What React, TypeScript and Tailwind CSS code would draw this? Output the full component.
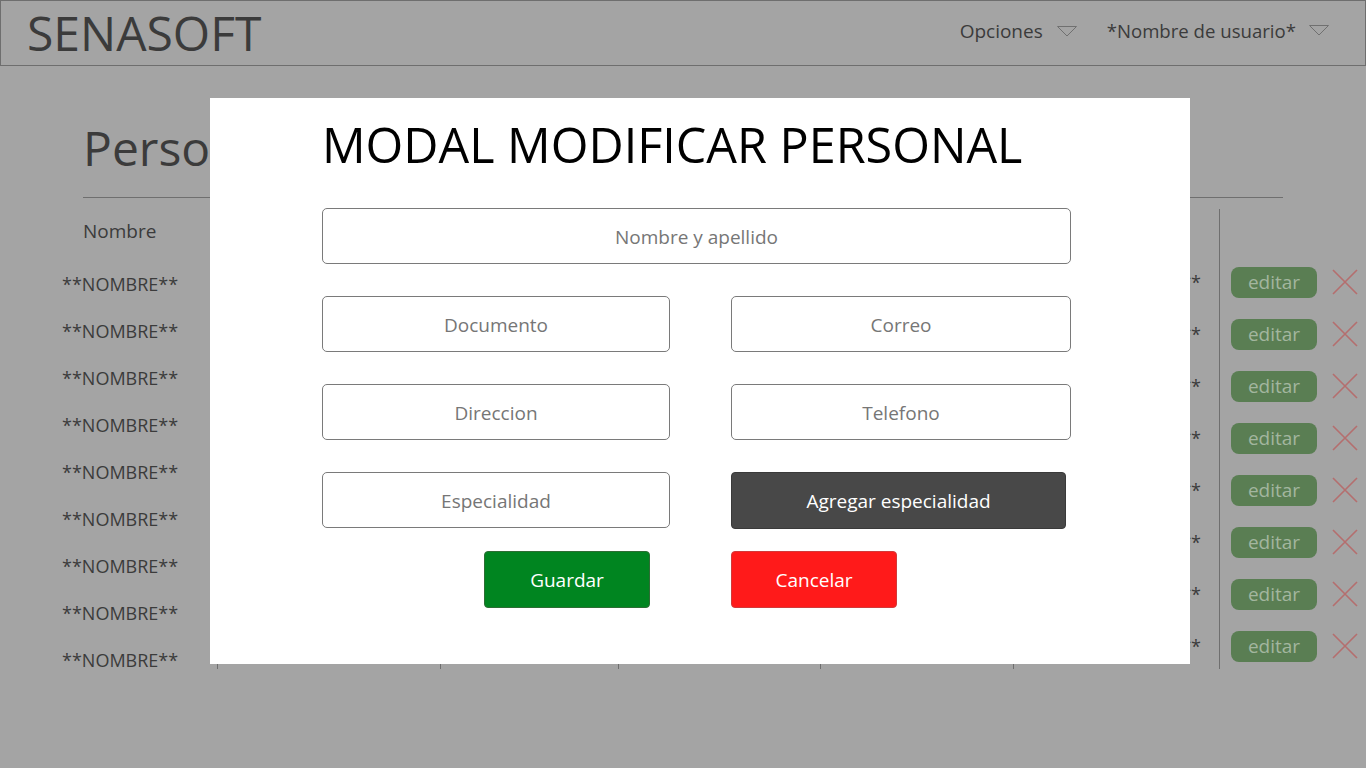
import React from 'react';

const font = { fontFamily: '"Open Sans", "Noto Sans", sans-serif' };

const Caret: React.FC<{ gap: string }> = ({ gap }) => (
  <svg width="20" height="11" viewBox="0 0 20 11" className={gap}>
    <path d="M0.5 0.5 L19.5 0.5 L10 10 Z" fill="none" stroke="#707070" strokeWidth="1" />
  </svg>
);

const Cross = () => (
  <svg width="26" height="26" viewBox="0 0 26 26">
    <path d="M1 1 L25 25 M25 1 L1 25" stroke="#b56e6e" strokeWidth="1.6" />
  </svg>
);

const names = Array.from({ length: 9 });
const actions = Array.from({ length: 8 });
const midCols = ['w-[223px]', 'w-[178px]', 'w-[202px]', 'w-[193px]'];

const Field: React.FC<{ label: string; className?: string }> = ({ label, className }) => (
  <div
    className={`h-[56px] pt-[4px] border border-[#7a7a7a] rounded-[5px] flex items-center justify-center text-[19px] text-[#767676] ${className ?? ''}`}
  >
    {label}
  </div>
);

export default function App() {
  return (
    <div className="w-[1366px] h-[768px] bg-[#a4a4a4] overflow-hidden relative" style={font}>
      {/* header */}
      <header className="h-[66px] border border-[#6e6e6e] flex items-center justify-between">
        <div className="pl-[26px] text-[48px] leading-none text-[#3b3b3b]">SENASOFT</div>
        <div className="flex items-center pr-[36px] pb-[4px] text-[19px] text-[#3b3b3b]">
          <div className="flex items-center">
            Opciones
            <Caret gap="ml-[14px]" />
          </div>
          <div className="flex items-center ml-[30px] text-[18.6px]">
            *Nombre de usuario*
            <Caret gap="ml-[13px]" />
          </div>
        </div>
      </header>

      {/* page */}
      <main className="pt-[58px]">
        <h1 className="ml-[83px] text-[48px] leading-none text-[#3b3b3b]">Personal</h1>
        <div className="ml-[83px] w-[1200px] mt-[25px] border-t border-[#6f6f6f]" />

        <div className="flex mt-[11px] h-[460px]">
          <div className="w-[217px] pl-[62px] text-[18px] text-[#3b3b3b]">
            <div className="pl-[21px] h-[40px] mt-[2px] flex items-center text-[19px]">Nombre</div>
            <div className="mt-[10px]">
              {names.map((_, i) => (
                <div key={i} className="h-[47px] flex items-center">**NOMBRE**</div>
              ))}
            </div>
          </div>
          {midCols.map((w, i) => (
            <div key={i} className={`${w} border-l border-[#6f6f6f]`} />
          ))}
          <div className="w-[206px] border-l border-[#6f6f6f] pt-[47px] pr-[18px] text-[18px] text-[#3b3b3b]">
            {actions.map((_, i) => (
              <div key={i} className="h-[52px] flex items-center justify-end">**CORREO**</div>
            ))}
          </div>
          <div className="border-l border-[#6f6f6f] pt-[47px] pl-[11px]">
            {actions.map((_, i) => (
              <div key={i} className="h-[52px] flex items-center">
                <button className="w-[86px] h-[31px] rounded-[8px] bg-[#5a7e53] text-[#a3b69f] text-[19px] leading-none">
                  editar
                </button>
                <span className="ml-[15px] flex">
                  <Cross />
                </span>
              </div>
            ))}
          </div>
        </div>
      </main>

      {/* modal */}
      <div className="absolute left-[210px] top-[98px] w-[980px] h-[566px] bg-white pl-[112px]">
        <h2 className="mt-[20px] text-[48.5px] leading-none text-black whitespace-nowrap pt-[2px]">
          MODAL MODIFICAR PERSONAL
        </h2>
        <div className="w-[749px] mt-[39px] flex flex-col gap-[32px]">
          <Field label="Nombre y apellido" />
          <div className="flex justify-between">
            <Field label="Documento" className="w-[348px]" />
            <Field label="Correo" className="w-[340px]" />
          </div>
          <div className="flex justify-between">
            <Field label="Direccion" className="w-[348px]" />
            <Field label="Telefono" className="w-[340px]" />
          </div>
          <div className="flex justify-between">
            <Field label="Especialidad" className="w-[348px]" />
            <button className="w-[335px] h-[57px] pt-[2px] mr-[5px] rounded-[4px] bg-[#484848] border border-[#3a3a3a] text-white text-[19px]">
              Agregar especialidad
            </button>
          </div>
        </div>
        <div className="flex mt-[22px]">
          <button className="ml-[162px] w-[166px] h-[57px] pt-[2px] rounded-[4px] bg-[#008520] border border-[#2d6d34] text-white text-[19px]">
            Guardar
          </button>
          <button className="ml-[81px] w-[166px] h-[57px] pt-[2px] rounded-[4px] bg-[#ff1a1a] border border-[#d23a3a] text-white text-[19px]">
            Cancelar
          </button>
        </div>
      </div>
    </div>
  );
}
